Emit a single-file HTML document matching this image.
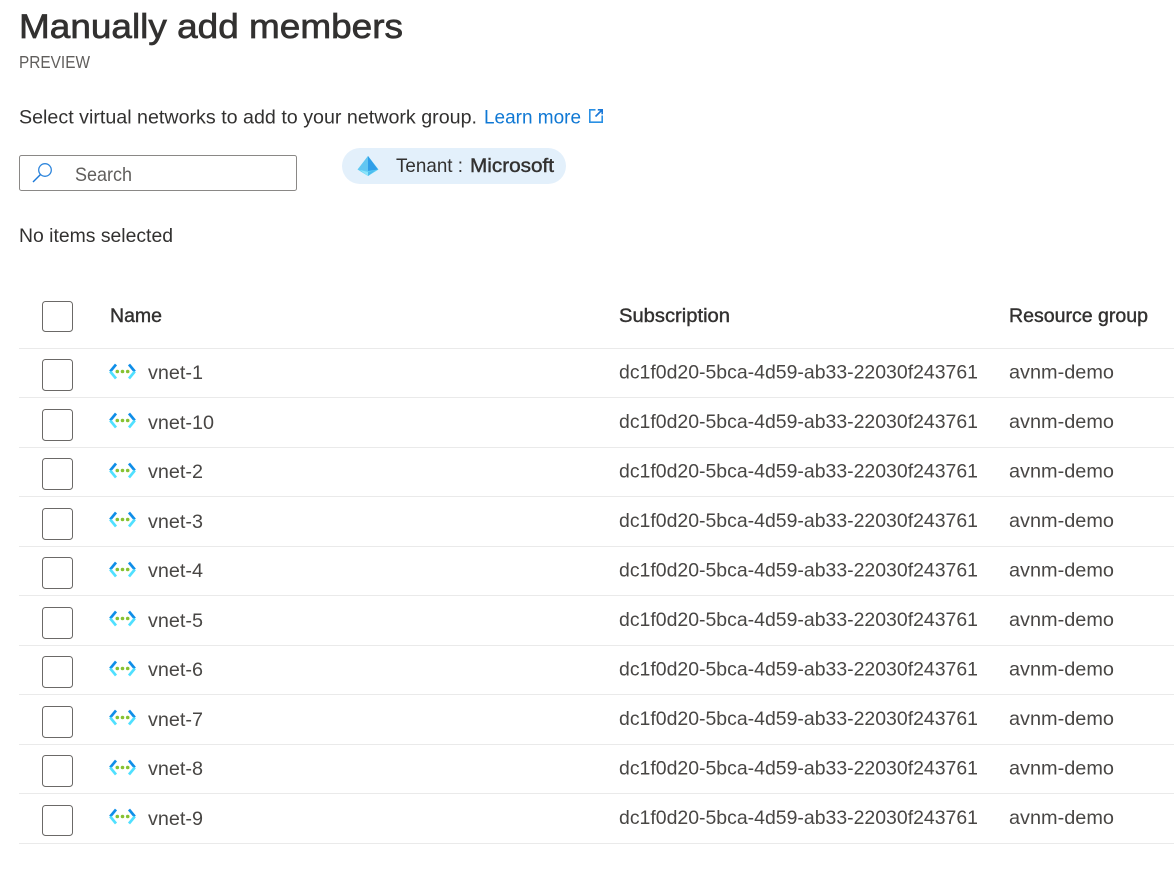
<!DOCTYPE html>
<html lang="en">
<head>
<meta charset="utf-8">
<title>Manually add members</title>
<style>
html,body{margin:0;padding:0;background:#fff;width:1174px;height:882px;overflow:hidden}
svg{display:block}
text{font-family:"Liberation Sans",Arial,sans-serif;font-size:19.5px;fill:#323130}
.r{fill:#484644}
.h{fill:#323130;font-size:19px;stroke:#323130;stroke-width:.4px}
.c{fill:#fff;stroke:#6b6967;stroke-width:1}
.l{stroke:#eaeaea;stroke-width:1}
</style>
</head>
<body>
<svg width="1174" height="882" viewBox="0 0 1174 882" xmlns="http://www.w3.org/2000/svg">
<defs>
<g id="v">
<path d="M116 364.500 L110.200 371.500" fill="none" stroke="#0f8ee8" stroke-width="2.700"/>
<path d="M110.200 371.500 L116 378.500" fill="none" stroke="#50e0ff" stroke-width="2.700"/>
<path d="M129 364.500 L134.800 371.500" fill="none" stroke="#0f8ee8" stroke-width="2.700"/>
<path d="M134.800 371.500 L129 378.500" fill="none" stroke="#50e0ff" stroke-width="2.700"/>
<circle cx="117.300" cy="371.500" r="1.800" fill="#86c232"/>
<circle cx="122.500" cy="371.500" r="1.800" fill="#86c232"/>
<circle cx="127.700" cy="371.500" r="1.800" fill="#86c232"/>
</g>
</defs>

<text x="19" y="38" style="font-size:34px;stroke:#323130;stroke-width:.7px" textLength="384" lengthAdjust="spacingAndGlyphs">Manually add members</text>
<text x="19" y="68" style="font-size:17.500px;fill:#605e5c" textLength="71" lengthAdjust="spacingAndGlyphs">PREVIEW</text>
<text x="19" y="123.500" textLength="458" lengthAdjust="spacingAndGlyphs">Select virtual networks to add to your network group.</text>
<text x="484" y="123.500" style="fill:#0f78d4" textLength="97" lengthAdjust="spacingAndGlyphs">Learn more</text>
<path d="M595.500 109.800H589.800V122.200H602.200V115.500" fill="none" stroke="#2a90e4" stroke-width="1.600"/>
<path d="M595.500 116.500L602 110M597.800 109.800H602.200V114.200" fill="none" stroke="#1a78d8" stroke-width="1.600"/>

<rect x="19.500" y="155.500" width="277" height="35" rx="2" fill="#fff" stroke="#8a8886"/>
<circle cx="45" cy="170" r="6.300" fill="none" stroke="#2f86dc" stroke-width="1.300"/>
<path d="M40.500 174.500L33 182" fill="none" stroke="#1a78d8" stroke-width="1.400"/>
<text x="75" y="181" style="fill:#605e5c" textLength="57" lengthAdjust="spacingAndGlyphs">Search</text>

<rect x="342" y="148" width="224" height="36" rx="18" fill="#e3f0fb"/>
<path d="M368 156L357.500 169.500L368 176L378.500 169.500Z" fill="#5fd0f5"/>
<path d="M368 156L368 171L378 169.500Z" fill="#2f9ee8"/>
<path d="M368 156L358 169.500L368 171Z" fill="#62c6f2"/>
<path d="M360 170L368 172L368 176Z" fill="#8be4fa"/>
<path d="M376 170L368 172L368 176Z" fill="#4cbcee"/>
<text x="396" y="172" textLength="67" lengthAdjust="spacingAndGlyphs">Tenant :</text>
<text x="470" y="172" style="font-size:19px;stroke:#323130;stroke-width:.4px" textLength="84" lengthAdjust="spacingAndGlyphs">Microsoft</text>

<text x="19" y="242" textLength="154" lengthAdjust="spacingAndGlyphs">No items selected</text>

<rect class="c" x="42.500" y="301.500" width="30" height="30" rx="3"/>
<text class="h" x="110" y="322" textLength="52" lengthAdjust="spacingAndGlyphs">Name</text>
<text class="h" x="619" y="322" textLength="111" lengthAdjust="spacingAndGlyphs">Subscription</text>
<text class="h" x="1009" y="322" textLength="139" lengthAdjust="spacingAndGlyphs">Resource group</text>

<path class="l" d="M19 348.500H1174M19 397.500H1174M19 447.500H1174M19 496.500H1174M19 546.500H1174M19 595.500H1174M19 645.500H1174M19 694.500H1174M19 744.500H1174M19 793.500H1174M19 843.500H1174"/>

<rect class="c" x="42.500" y="359.500" width="30" height="31" rx="3"/>
<use href="#v"/>
<text class="r" x="148" y="379" textLength="55" lengthAdjust="spacingAndGlyphs">vnet-1</text>
<text class="r" x="619" y="378.500" textLength="359" lengthAdjust="spacingAndGlyphs">dc1f0d20-5bca-4d59-ab33-22030f243761</text>
<text class="r" x="1009" y="378.500" textLength="105" lengthAdjust="spacingAndGlyphs">avnm-demo</text>

<rect class="c" x="42.500" y="409.500" width="30" height="31" rx="3"/>
<use href="#v" y="49"/>
<text class="r" x="148" y="429" textLength="66" lengthAdjust="spacingAndGlyphs">vnet-10</text>
<text class="r" x="619" y="428" textLength="359" lengthAdjust="spacingAndGlyphs">dc1f0d20-5bca-4d59-ab33-22030f243761</text>
<text class="r" x="1009" y="428" textLength="105" lengthAdjust="spacingAndGlyphs">avnm-demo</text>

<rect class="c" x="42.500" y="458.500" width="30" height="31" rx="3"/>
<use href="#v" y="99"/>
<text class="r" x="148" y="478" textLength="55" lengthAdjust="spacingAndGlyphs">vnet-2</text>
<text class="r" x="619" y="477.500" textLength="359" lengthAdjust="spacingAndGlyphs">dc1f0d20-5bca-4d59-ab33-22030f243761</text>
<text class="r" x="1009" y="477.500" textLength="105" lengthAdjust="spacingAndGlyphs">avnm-demo</text>

<rect class="c" x="42.500" y="508.500" width="30" height="31" rx="3"/>
<use href="#v" y="148"/>
<text class="r" x="148" y="528" textLength="55" lengthAdjust="spacingAndGlyphs">vnet-3</text>
<text class="r" x="619" y="527" textLength="359" lengthAdjust="spacingAndGlyphs">dc1f0d20-5bca-4d59-ab33-22030f243761</text>
<text class="r" x="1009" y="527" textLength="105" lengthAdjust="spacingAndGlyphs">avnm-demo</text>

<rect class="c" x="42.500" y="557.500" width="30" height="31" rx="3"/>
<use href="#v" y="198"/>
<text class="r" x="148" y="577" textLength="55" lengthAdjust="spacingAndGlyphs">vnet-4</text>
<text class="r" x="619" y="576.500" textLength="359" lengthAdjust="spacingAndGlyphs">dc1f0d20-5bca-4d59-ab33-22030f243761</text>
<text class="r" x="1009" y="576.500" textLength="105" lengthAdjust="spacingAndGlyphs">avnm-demo</text>

<rect class="c" x="42.500" y="607.500" width="30" height="31" rx="3"/>
<use href="#v" y="247"/>
<text class="r" x="148" y="627" textLength="55" lengthAdjust="spacingAndGlyphs">vnet-5</text>
<text class="r" x="619" y="626" textLength="359" lengthAdjust="spacingAndGlyphs">dc1f0d20-5bca-4d59-ab33-22030f243761</text>
<text class="r" x="1009" y="626" textLength="105" lengthAdjust="spacingAndGlyphs">avnm-demo</text>

<rect class="c" x="42.500" y="656.500" width="30" height="31" rx="3"/>
<use href="#v" y="297"/>
<text class="r" x="148" y="676" textLength="55" lengthAdjust="spacingAndGlyphs">vnet-6</text>
<text class="r" x="619" y="675.500" textLength="359" lengthAdjust="spacingAndGlyphs">dc1f0d20-5bca-4d59-ab33-22030f243761</text>
<text class="r" x="1009" y="675.500" textLength="105" lengthAdjust="spacingAndGlyphs">avnm-demo</text>

<rect class="c" x="42.500" y="706.500" width="30" height="31" rx="3"/>
<use href="#v" y="346"/>
<text class="r" x="148" y="726" textLength="55" lengthAdjust="spacingAndGlyphs">vnet-7</text>
<text class="r" x="619" y="725" textLength="359" lengthAdjust="spacingAndGlyphs">dc1f0d20-5bca-4d59-ab33-22030f243761</text>
<text class="r" x="1009" y="725" textLength="105" lengthAdjust="spacingAndGlyphs">avnm-demo</text>

<rect class="c" x="42.500" y="755.500" width="30" height="31" rx="3"/>
<use href="#v" y="396"/>
<text class="r" x="148" y="775" textLength="55" lengthAdjust="spacingAndGlyphs">vnet-8</text>
<text class="r" x="619" y="774.500" textLength="359" lengthAdjust="spacingAndGlyphs">dc1f0d20-5bca-4d59-ab33-22030f243761</text>
<text class="r" x="1009" y="774.500" textLength="105" lengthAdjust="spacingAndGlyphs">avnm-demo</text>

<rect class="c" x="42.500" y="805.500" width="30" height="30" rx="3"/>
<use href="#v" y="445"/>
<text class="r" x="148" y="825" textLength="55" lengthAdjust="spacingAndGlyphs">vnet-9</text>
<text class="r" x="619" y="824" textLength="359" lengthAdjust="spacingAndGlyphs">dc1f0d20-5bca-4d59-ab33-22030f243761</text>
<text class="r" x="1009" y="824" textLength="105" lengthAdjust="spacingAndGlyphs">avnm-demo</text>
</svg>
</body>
</html>
